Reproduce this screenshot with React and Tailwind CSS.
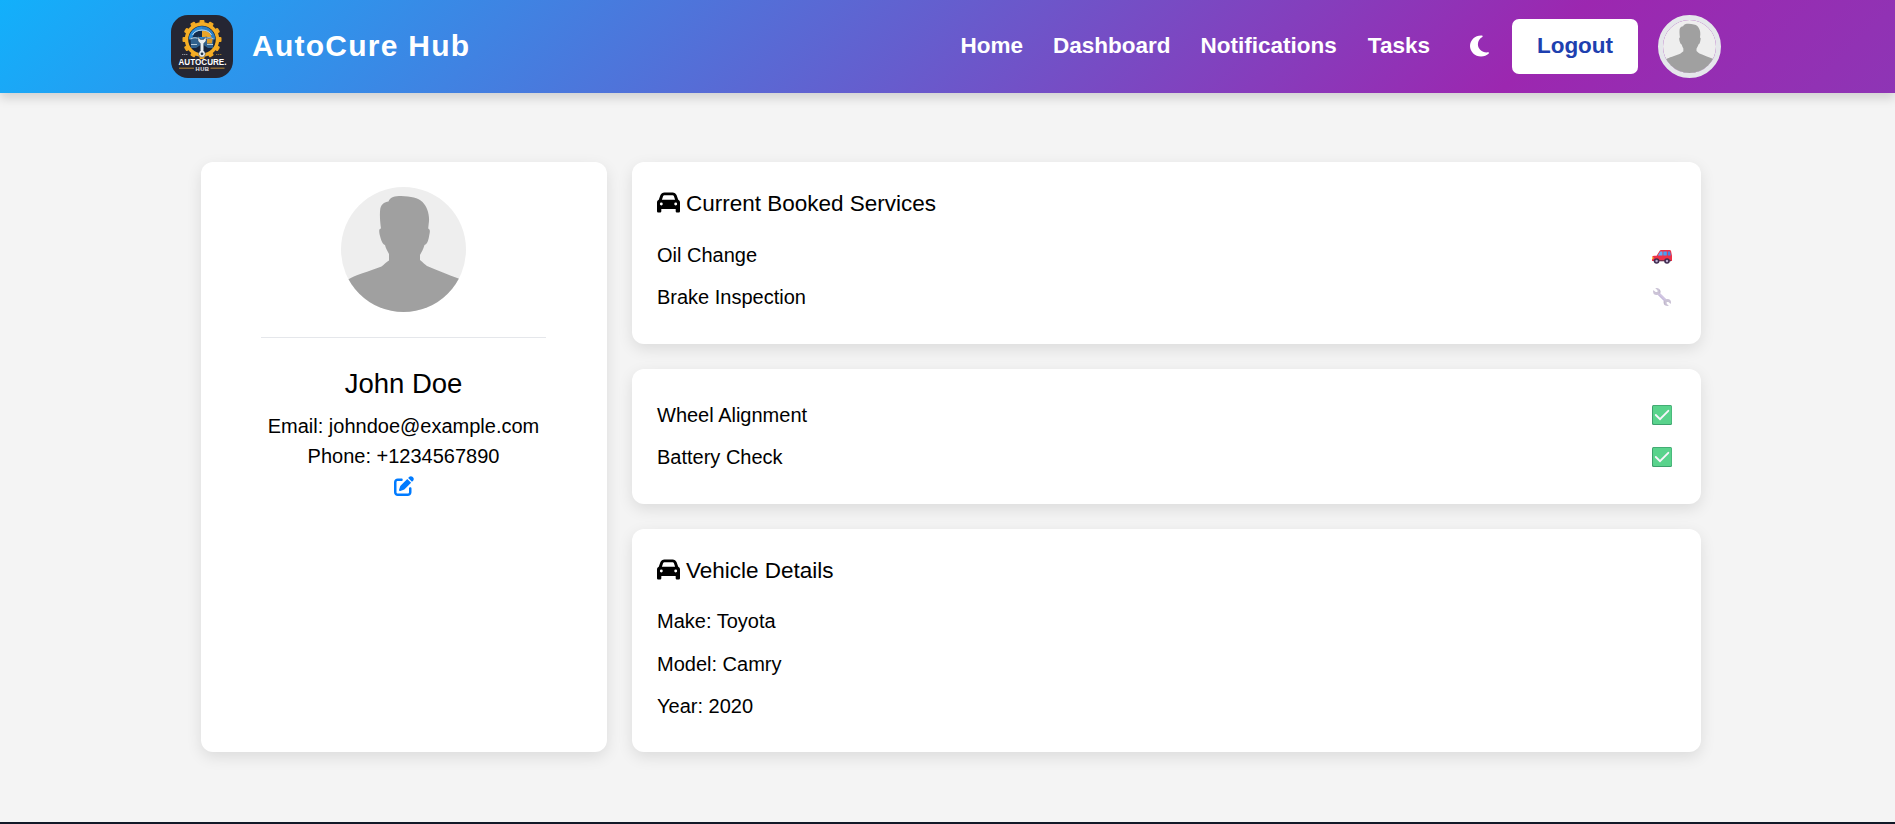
import { FaCar, FaMoon, FaPenToSquare } from "react-icons/fa6";

function Silhouette({ className, detailed }) {
  return (
    <svg viewBox="0 0 125 125" className={className}>
      <defs>
        <clipPath id={detailed ? "bigClip" : "smallClip"}>
          <circle cx="62.5" cy="62.5" r="62.5" />
        </clipPath>
      </defs>
      <g clipPath={detailed ? "url(#bigClip)" : "url(#smallClip)"}>
        <rect width="125" height="125" fill="#eeeeee" />
        <path
          fill="#a0a0a0"
          d="M47.500 14.500C49 10 54 9 60 9C70 9.500 77 10.500 81.500 15C86 19.500 88.500 27 88 34L87.200 41.500C89.500 42.500 89 45 88.300 48C87.500 52.500 86.500 57.500 83.500 58C82.500 62 80.500 65 79 68V73C82 75.500 84 77.500 86 79C96 83 108 88 117.500 91.500L125 96V125H0V96L8 92C13 88.500 28 84.500 40.500 79.500C43 77.500 45.500 75 48 73.500V67C46.500 64 44.500 61 44 58C41 57 39.500 51 38.500 47C38 43.500 38 41.500 40 41.500C39 35 38.500 27 39.300 21.500C40.500 17 43.500 15 47.500 14.500Z"
        />
      </g>
    </svg>
  );
}

function Logo() {
  const teeth = [0, 30, 60, 90, 120, 150, 180, 210, 240, 270, 300, 330];
  return (
    <svg viewBox="0 0 62 63" className="h-[63px] w-[62px] shrink-0">
      <rect width="62" height="63" rx="17" fill="#252633" />
      <g fill="#f2a922">
        {teeth.map((a) => (
          <rect key={a} x="28.500" y="5" width="5" height="6" rx="1" transform={`rotate(${a} 31 24.500)`} />
        ))}
      </g>
      <circle cx="31" cy="24.500" r="15.500" fill="#16233b" stroke="#f5ae25" strokeWidth="3.400" />
      <path d="M17.800 24.500A13.200 13.200 0 0 1 31 11.300V24Z" fill="#2c8bd6" />
      <path d="M31 11.300A13.200 13.200 0 0 1 44.200 24.500L31 24Z" fill="#2c7fc4" />
      <path d="M20 25L23.500 18Q27 15.500 31 15.800V22H24Z" fill="#142c4e" />
      <path d="M31 15.800Q36 15.500 38.500 18L42 25L37 22H31Z" fill="#e9a52a" />
      <path d="M21.500 20Q24 15.200 31 15Q38 15.200 40.500 20" fill="none" stroke="#c4dced" strokeWidth="1" />
      <path d="M19.500 23.500Q25 20.500 31 24Q37 20.500 42.500 23.500L42 33H37L31 29L25 33H20Z" fill="#2f618e" />
      <path d="M19.500 24Q25 21 29.500 25M42.500 24Q37 21 32.500 25M20 29.500H26M36 29.500H42" fill="none" stroke="#b5cbdc" strokeWidth="1.100" />
      <path d="M36 24L41.500 23.500L41 28.500H36Z" fill="#d99a2a" />
      <path
        d="M27 21.500V26L29.300 28.500V36A3.300 3.300 0 1 0 32.700 36V28.500L35 26V21.500L32.800 24.500H29.200Z"
        fill="#e8edf0"
        stroke="#34485d"
        strokeWidth=".5"
      />
      <circle cx="31" cy="38.800" r="1.400" fill="#26394e" />
      <path d="M11 39.500H17" stroke="#8a8d98" strokeWidth="1.200" strokeDasharray="1.400 .6" />
      <path d="M45 39.500H51" stroke="#8d6c2d" strokeWidth="1.200" strokeDasharray="1.400 .6" />
      <text x="7.500" y="50" textLength="48" lengthAdjust="spacingAndGlyphs" fill="#fff" fontSize="8.600" fontWeight="700" fontFamily="Liberation Sans, Arial, sans-serif">
        AUTOCURE.
      </text>
      <text x="24.500" y="56" textLength="13.500" lengthAdjust="spacing" fill="#e4e5ea" fontSize="5.800" fontWeight="700" fontFamily="Liberation Sans, Arial, sans-serif">
        HUB
      </text>
      <path d="M8 53.300H23M39.500 53.300H53.500" stroke="#8b6a35" strokeWidth="1.400" />
    </svg>
  );
}

function CarEmoji() {
  return (
    <svg viewBox="0 0 20 20" className="h-5 w-5">
      <path d="M4.600 10.700L7.400 6.200Q8 5 9.300 5H17.500Q18.800 5 19.100 6.300L20 10.700V16H0V12.500Q0 10.900 2 10.700Z" fill="#ee3048" />
      <path d="M5.800 10.500L8.300 6.500H10.500V10.500Z" fill="#5aaefc" />
      <path d="M11.300 6.500H14.800V10.500H11.300Z" fill="#469ff5" />
      <path d="M15.800 6.500H18L18.800 10.500H15.800Z" fill="#3f86e6" />
      <path d="M1.500 15.200H19V16.300H1.500Z" fill="#63304f" />
      <rect y="11.800" width="1.400" height="2.400" rx=".6" fill="#ffc83d" />
      <circle cx="4.600" cy="16" r="2.800" fill="#3f2c50" />
      <circle cx="15" cy="16" r="2.800" fill="#3f2c50" />
      <circle cx="4.600" cy="16" r="1.200" fill="#bdaed0" />
      <circle cx="15" cy="16" r="1.200" fill="#bdaed0" />
    </svg>
  );
}

function WrenchEmoji() {
  return (
    <svg viewBox="0 0 20 20" className="h-5 w-5" fill="none">
      <path d="M5.500 5.500L14.700 14.500" stroke="#d0c5e2" strokeWidth="2.800" />
      <path d="M6.500 8L12.500 14" stroke="#b8abd2" strokeWidth=".7" />
      <circle cx="4.600" cy="4.600" r="3.500" fill="#cbc3d6" />
      <circle cx="15.500" cy="15.500" r="3.500" fill="#cbc3d6" />
      <path d="M.5 2.500L2.500 .5L5.500 3.300V5H3.700Z" fill="#fff" />
      <path d="M19.500 17.500L17.500 19.500L14.700 16.700V15H16.400Z" fill="#fff" />
      <path d="M7.500 2.700Q8.600 4.400 7.900 6.200M12.100 14Q11.600 16.200 13 17.900" stroke="#b5abc3" strokeWidth=".8" />
    </svg>
  );
}

function CheckEmoji() {
  return (
    <svg viewBox="0 0 20 20" className="h-5 w-5">
      <rect width="20" height="20" rx="1.500" fill="#3da06d" />
      <rect x="1" y=".7" width="18.500" height="18.200" rx="1" fill="#59d38c" />
      <path d="M3.800 10L8 14.200L16.300 5.800" fill="none" stroke="#f7f5fb" strokeWidth="1.900" strokeLinecap="round" />
    </svg>
  );
}

function Card({ className, children }) {
  return (
    <section className={`rounded-[12px] bg-white shadow-[0_5px_15px_rgba(0,0,0,0.1)] ${className}`}>
      {children}
    </section>
  );
}

function Row({ label, icon }) {
  return (
    <li className="flex h-[42px] items-center justify-between pr-[4px]">
      <span>{label}</span>
      {icon}
    </li>
  );
}

function CardTitle({ children }) {
  return (
    <h3 className="flex h-[34px] items-center gap-[6px] text-[22.500px]">
      <FaCar className="mb-[2px] h-[23px] w-[23px]" />
      <span className="pt-px">{children}</span>
    </h3>
  );
}

export default function App() {
  return (
    <div className="flex h-[824px] flex-col overflow-hidden bg-[#f4f4f4] font-['Liberation_Sans',Arial,sans-serif] text-[20px] leading-[30px] text-black">
      <header className="z-10 flex h-[93px] shrink-0 items-center justify-between bg-[linear-gradient(135deg,#12b0fb_0%,#9c27b0_80%,#8e35b5_100%)] pr-[174px] pl-[171px] shadow-[0_5px_10px_rgba(0,0,0,0.15)]">
        <div className="flex items-center gap-[19px]">
          <Logo />
          <h1 className="pb-[2px] text-[30px] font-bold tracking-[1.250px] text-white">AutoCure Hub</h1>
        </div>
        <div className="flex items-center">
          <nav className="flex gap-[30px] pb-px text-[22.500px] font-bold text-white">
            <a>Home</a>
            <a>Dashboard</a>
            <a>Notifications</a>
            <a className="ml-px">Tasks</a>
          </nav>
          <FaMoon className="mb-[2px] ml-[40px] h-6 w-[19px] text-white" preserveAspectRatio="none" />
          <button className="ml-[23px] h-[55px] w-[126px] rounded-[7px] bg-white pb-px text-[22.500px] font-bold text-[#1e40af]">
            Logout
          </button>
          <div className="ml-5 h-[63px] w-[63px] rounded-full border-[5px] border-[#e5e7eb]">
            <Silhouette className="h-[53px] w-[53px]" />
          </div>
        </div>
      </header>

      <main className="flex gap-[25px] pt-[69px] pr-[194px] pl-[201px]">
        <Card className="flex h-[590px] w-[406px] flex-col items-center pt-[25px] pr-px">
          <Silhouette detailed className="h-[125px] w-[125px]" />
          <div className="mt-[25px] h-px w-[285px] bg-[#e5e7eb]" />
          <h2 className="mt-[28px] text-[27.500px] leading-9">John Doe</h2>
          <p className="mt-[9px]">Email: johndoe@example.com</p>
          <p>Phone: +1234567890</p>
          <FaPenToSquare className="mt-[5px] h-5 w-5 text-[#007bff]" />
        </Card>

        <div className="flex flex-1 flex-col gap-[25px]">
          <Card className="h-[182px] px-[25px] pt-[24px]">
            <CardTitle>Current Booked Services</CardTitle>
            <ul className="pt-[14px]">
              <Row label="Oil Change" icon={<CarEmoji />} />
              <Row label="Brake Inspection" icon={<WrenchEmoji />} />
            </ul>
          </Card>
          <Card className="h-[135px] px-[25px] pt-[25px]">
            <ul>
              <Row label="Wheel Alignment" icon={<CheckEmoji />} />
              <Row label="Battery Check" icon={<CheckEmoji />} />
            </ul>
          </Card>
          <Card className="h-[223px] px-[25px] pt-[24px]">
            <CardTitle>Vehicle Details</CardTitle>
            <ul className="space-y-[0.500px] pt-[13px]">
              <Row label="Make: Toyota" />
              <Row label="Model: Camry" />
              <Row label="Year: 2020" />
            </ul>
          </Card>
        </div>
      </main>

      <footer className="mt-auto h-[2px] shrink-0 bg-[#111827]" />
    </div>
  );
}
